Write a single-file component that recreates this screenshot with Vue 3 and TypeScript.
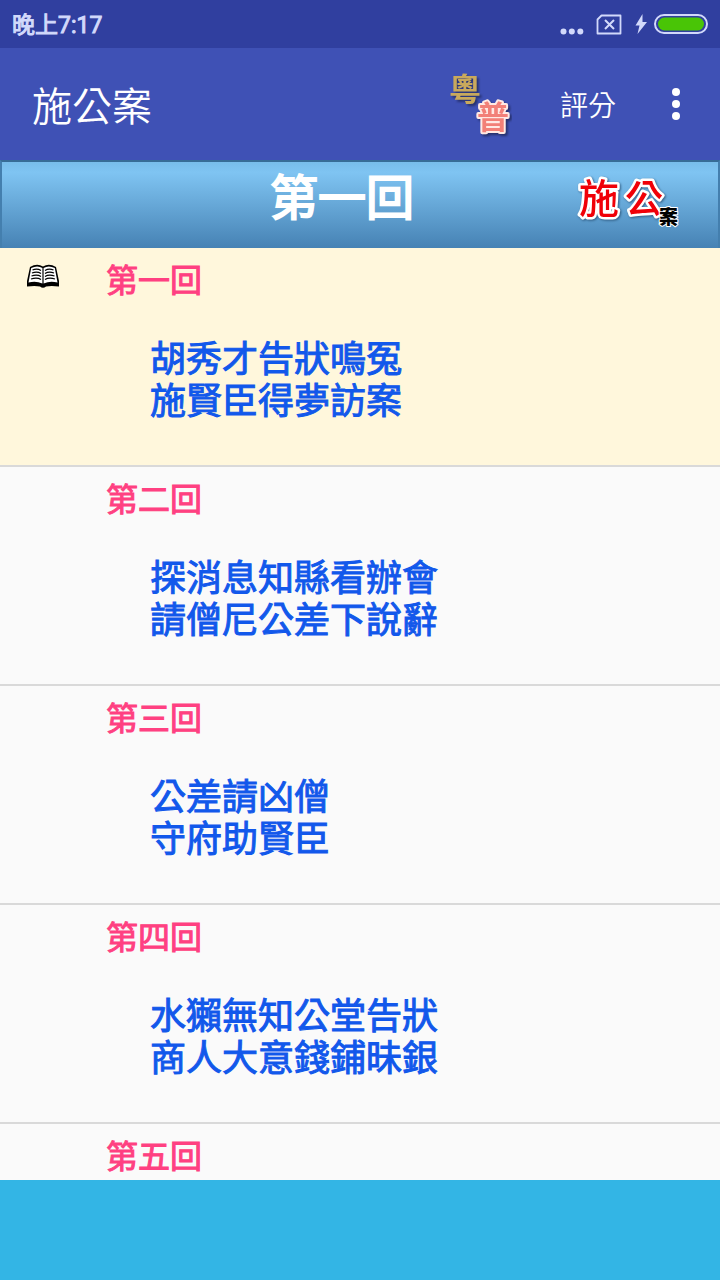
<script setup lang="ts">
import { ref } from 'vue'

interface Chapter {
  title: string
  lines: string[]
}

const chapters: Chapter[] = [
  { title: '第一回', lines: ['胡秀才告狀鳴冤', '施賢臣得夢訪案'] },
  { title: '第二回', lines: ['探消息知縣看辦會', '請僧尼公差下說辭'] },
  { title: '第三回', lines: ['公差請凶僧', '守府助賢臣'] },
  { title: '第四回', lines: ['水獺無知公堂告狀', '商人大意錢鋪昧銀'] },
  { title: '第五回', lines: [] },
]

const current = ref(0)
</script>

<template>
  <div class="screen">
    <div class="status">
      <span class="clock">晚上7:17</span>
      <svg class="signals" width="150" height="48" viewBox="0 0 150 48" aria-hidden="true">
        <g fill="#d2d9fb">
          <circle cx="5.500" cy="31.500" r="3" />
          <circle cx="13.800" cy="31.500" r="3" />
          <circle cx="22.300" cy="31.500" r="3" />
          <path d="M84.500 14 L77.500 25.500 H81.500 L79.500 34 L89 22 H84.500 Z" />
        </g>
        <path d="M43.500 15.500 H62.500 V33.500 H39.500 V19.500 Z" fill="none" stroke="#d2d9fb" stroke-width="1.800" stroke-linejoin="round" />
        <path d="M47 20 L56 29 M56 20 L47 29" stroke="#d2d9fb" stroke-width="2" />
        <rect x="97" y="15" width="52" height="18" rx="9" fill="none" stroke="#d2d9fb" stroke-width="2" />
        <rect x="100" y="17.500" width="46" height="13" rx="6.500" fill="#49c506" />
      </svg>
    </div>

    <header class="appbar">
      <h1 class="app-title">施公案</h1>
      <button class="lang" type="button" aria-label="粵普">
        <svg width="64" height="88" viewBox="0 0 64 88">
          <text class="lang-yue" x="1" y="41" font-size="32">粵</text>
          <text class="lang-pu" x="29" y="69" font-size="32">普</text>
        </svg>
      </button>
      <button class="rate" type="button">評分</button>
      <button class="more" type="button" aria-label="更多">
        <svg width="12" height="36" viewBox="0 0 12 36">
          <g fill="#fff">
            <circle cx="6" cy="6" r="4" />
            <circle cx="6" cy="18" r="4" />
            <circle cx="6" cy="30" r="4" />
          </g>
        </svg>
      </button>
    </header>

    <section class="banner">
      <h2 class="banner-title">{{ chapters[current].title }}</h2>
      <svg class="logo" width="106" height="76" viewBox="0 0 106 76" role="img" aria-label="施公案">
        <text class="logo-red" x="3" y="49" font-size="40">施</text>
        <text class="logo-red" x="49" y="48" font-size="38">公</text>
        <text class="logo-black" x="83" y="60" font-size="19">案</text>
      </svg>
    </section>

    <ul class="list">
      <li v-for="(chapter, i) in chapters" :key="chapter.title" class="item">
        <button class="row" :class="{ active: i === current }" type="button" @click="current = i">
          <span class="mark">
            <svg v-if="i === current" width="34" height="26" viewBox="0 0 34 26" aria-hidden="true">
              <path d="M4 3 Q11 -1 17 2.500 Q23 -1 30 3 L33 17 V22.500 Q25 21.500 20 22.500 Q17 25 14 22.500 Q9 21.500 1 22.500 V17 Z" fill="#000" />
              <path d="M5.200 4 Q11.500 1 16.400 4 V19.500 Q10 16.500 2.500 18.500 Z M28.800 4 Q22.500 1 17.600 4 V19.500 Q24 16.500 31.500 18.500 Z" fill="#fff" />
              <path d="M6.500 6 Q11 4 15 6.500 M6 9 Q11 7 15 9.500 M5.500 12 Q11 10 15 12.500 M5 15 Q11 13 15 15.500 M27.500 6 Q23 4 19 6.500 M28 9 Q23 7 19 9.500 M28.500 12 Q23 10 19 12.500 M29 15 Q23 13 19 15.500" fill="none" stroke="#000" stroke-width="1.200" />
            </svg>
          </span>
          <span class="body">
            <span class="title">{{ chapter.title }}</span>
            <span class="lines">
              <span v-for="line in chapter.lines" :key="line" class="line">{{ line }}</span>
            </span>
          </span>
        </button>
      </li>
    </ul>

    <footer class="ad"></footer>
  </div>
</template>

<style>
body {
  margin: 0;
}
</style>

<style scoped>
.screen {
  display: flex;
  flex-direction: column;
  height: 100vh;
  overflow: hidden;
  background: #fafafa;
  font-family: Roboto, "Noto Sans CJK TC", sans-serif;
}

button {
  margin: 0;
  padding: 0;
  border: 0;
  background: none;
  color: inherit;
  font: inherit;
  text-align: left;
  cursor: pointer;
}

svg {
  display: block;
}

.status {
  display: flex;
  flex: none;
  align-items: center;
  justify-content: space-between;
  height: 48px;
  padding: 0 12px;
  background: #303f9f;
  color: #d2d9fb;
}

.clock {
  padding-top: 4px;
  font-size: 23px;
  line-height: 44px;
  font-weight: 400;
  -webkit-text-stroke: 1px #d2d9fb;
}

.appbar {
  display: flex;
  flex: none;
  align-items: center;
  height: 112px;
  padding: 0 38px 0 32px;
  background: #3f51b5;
  color: #fff;
}

.app-title {
  flex: 1;
  margin: 0;
  padding-top: 8px;
  font-size: 40px;
  line-height: 48px;
  font-weight: 350;
}

.lang {
  margin-right: 48px;
}

.lang text {
  font-family: "Noto Sans CJK TC", sans-serif;
  font-weight: 700;
}

.lang-yue {
  fill: #c9a95c;
  filter: drop-shadow(2px 2px 1px #26306c);
}

.lang-pu {
  fill: #f28078;
  stroke: #ffe9e4;
  stroke-width: 4px;
  stroke-linejoin: round;
  paint-order: stroke;
  filter: drop-shadow(2px 2px 1px #26306c);
}

.rate {
  margin-right: 54px;
  padding-top: 6px;
  font-size: 28px;
  line-height: 48px;
  font-weight: 350;
}

.banner {
  display: grid;
  flex: none;
  grid-template-columns: 1fr auto 1fr;
  align-items: start;
  box-sizing: border-box;
  height: 88px;
  padding: 0 36px 0 0;
  border: 2px solid #447fae;
  border-top-color: #376c96;
  border-bottom: 0;
  background: linear-gradient(#78bdea, #7fc4f2 12%, #4682b4);
  color: #fff;
}

.banner-title {
  grid-column: 2;
  margin: 0;
  font-size: 48px;
  line-height: 74px;
  font-weight: 400;
  -webkit-text-stroke: 2px #fff;
}

.logo {
  justify-self: end;
  margin-top: 2px;
}

.logo text {
  font-family: "Noto Sans CJK TC", sans-serif;
  font-weight: 500;
  stroke: #fff;
  stroke-width: 5px;
  stroke-linejoin: round;
  paint-order: stroke;
}

.logo-red {
  fill: #f00008;
  filter: drop-shadow(1px 1px 1px #315d83);
}

.logo .logo-black {
  fill: #000;
  stroke-width: 2px;
  font-weight: 900;
}

.list {
  flex: 1;
  min-height: 0;
  margin: 0;
  padding: 0;
  overflow: hidden;
  list-style: none;
}

.item {
  border-bottom: 2px solid #d9d9d9;
}

.row {
  display: flex;
  align-items: flex-start;
  width: 100%;
  min-height: 217px;
}

.row.active {
  background: #fff7dc;
}

.mark {
  flex: none;
  width: 80px;
  padding: 16px 0 0 26px;
}

.body {
  display: flex;
  flex-direction: column;
  gap: 34px;
  padding-top: 9px;
}

.title {
  color: #ff4081;
  font-size: 32px;
  line-height: 48px;
  font-weight: 400;
  -webkit-text-stroke: 1px #ff4081;
}

.lines {
  display: flex;
  flex-direction: column;
  padding-left: 44px;
}

.line {
  color: #1258eb;
  font-size: 36px;
  line-height: 42px;
  font-weight: 400;
  -webkit-text-stroke: 1px #1258eb;
}

.ad {
  flex: none;
  height: 100px;
  background: #33b5e5;
}
</style>
